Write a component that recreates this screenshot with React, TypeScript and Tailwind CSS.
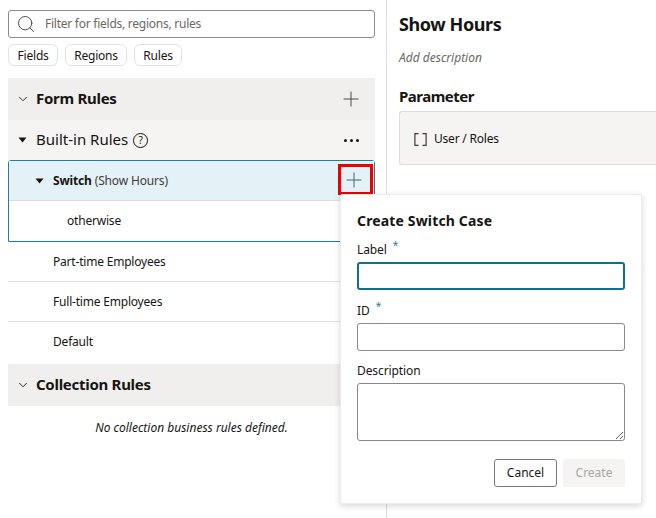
import React from 'react';
import { ChevronDown, Plus, Search } from 'lucide-react';

const Caret = () => (
  <svg width="9" height="6" viewBox="0 0 9 6" className="shrink-0">
    <path d="M0.5 0.5h8L4.5 5.5z" fill="#161513" />
  </svg>
);

const SectionHeader = ({ title, action }: { title: string; action?: React.ReactNode }) => (
  <div className="h-[42px] bg-[#f1efed] flex items-center pl-[8px] pr-[12px]">
    <ChevronDown className="w-[14px] h-[14px] text-[#161513] shrink-0" strokeWidth={1.5} />
    <span className="ml-[6px] pb-[2px] text-[15px] font-bold tracking-[-0.28px] text-[#161513]">{title}</span>
    <div className="ml-auto">{action}</div>
  </div>
);

const CaseRow = ({ label, last }: { label: string; last?: boolean }) => (
  <div className={`flex items-center pl-[45px] text-[12px] tracking-[-0.2px] text-[#161513] ${last ? 'h-[42px] pb-[2px]' : 'h-[40px] border-b border-[#e4e2df]'}`}>
    {label}
  </div>
);

const Field = ({ label, focused }: { label: string; focused?: boolean }) => (
  <div>
    <div className="h-[20px] flex items-start text-[12px] tracking-[-0.1px] text-[#161513] leading-[20px]">
      {label}
      <span className="ml-[6px] text-[10px] leading-[10px] text-[#227e9e]">*</span>
    </div>
    <input
      className={`mt-[2px] block w-[268px] h-[28px] rounded-[3px] bg-white outline-none ${focused ? 'border-2 border-[#0f6f8f]' : 'border border-[#8b8985]'}`}
    />
  </div>
);

export default function App() {
  return (
    <div className="relative w-[656px] h-[518px] overflow-hidden bg-white flex font-['Noto_Sans',sans-serif]">
      <div className="w-[387px] h-full shrink-0 border-r border-[#dfdddb] pl-[8px] pr-[11px] pt-[10px]">
        <div className="h-[28px] rounded-[3px] border border-[#8b8985] flex items-center pl-[7px]">
          <Search className="w-[20px] h-[20px] text-[#3f3d3a]" strokeWidth={1.1} />
          <span className="ml-[9px] text-[12px] tracking-[-0.25px] text-[#6a6864]">Filter for fields, regions, rules</span>
        </div>
        <div className="mt-[6px] flex gap-[6.5px]">
          {['Fields', 'Regions', 'Rules'].map((chip) => (
            <div key={chip} className="h-[22px] px-[8.5px] pt-[2px] flex items-center rounded-[6px] border border-[#e4e2df] text-[12px] tracking-[-0.2px] text-[#161513]">
              {chip}
            </div>
          ))}
        </div>

        <div className="mt-[12px]">
          <SectionHeader title="Form Rules" action={<Plus className="w-[24px] h-[24px] text-[#4b4a40]" strokeWidth={1} />} />
          <div className="h-[40px] bg-[#f5f4f2] flex items-center pl-[10px] pr-[15px]">
            <Caret />
            <span className="ml-[9px] pb-[2px] text-[15px] text-[#161513]">Built-in Rules</span>
            <span className="ml-[5px] w-[15px] h-[15px] rounded-full border border-[#161513] flex items-center justify-center text-[10px] leading-none text-[#161513]">?</span>
            <span className="ml-auto flex gap-[3px] pr-[1px]">
              <i className="w-[3px] h-[3px] rounded-full bg-[#161513]" />
              <i className="w-[3px] h-[3px] rounded-full bg-[#161513]" />
              <i className="w-[3px] h-[3px] rounded-full bg-[#161513]" />
            </span>
          </div>
          <div className="h-[82px] border border-[#227e9e] rounded-t-[3px]">
            <div className="h-[40px] bg-[#e4f1f7] border-b border-[#dfdddb] flex items-center pl-[26px]">
              <Caret />
              <span className="ml-[9px] text-[12px] tracking-[-0.16px] text-[#161513]">
                <span className="font-bold">Switch</span> <span className="text-[#3f3d3a]">(Show Hours)</span>
              </span>
            </div>
            <div className="h-[40px] flex items-center pl-[58px] text-[12px] tracking-[-0.2px] text-[#161513]">otherwise</div>
          </div>
          <CaseRow label="Part-time Employees" />
          <CaseRow label="Full-time Employees" />
          <CaseRow label="Default" last />
          <SectionHeader title="Collection Rules" />
          <div className="mt-[13px] text-center text-[12px] italic text-[#161513]">No collection business rules defined.</div>
        </div>
      </div>

      <div className="flex-1 pl-[12px] pt-[11px]">
        <h1 className="text-[18px] leading-[26px] font-bold tracking-[-0.4px] text-[#161513]">Show Hours</h1>
        <div className="mt-[12px] text-[12px] leading-[18px] italic text-[#6a6864]">Add description</div>
        <h2 className="mt-[19px] text-[15px] leading-[20px] font-bold tracking-[-0.5px] text-[#161513]">Parameter</h2>
        <div className="mt-[5px] h-[54px] w-[300px] rounded-[3px] border border-[#dfdddb] border-r-0 bg-[#f5f4f2] flex items-center pl-[14px] pt-[2px]">
          <svg width="13" height="13" viewBox="0 0 13 13" fill="none" stroke="#4a3630" strokeWidth="1.2" className="shrink-0">
            <path d="M4.5 0.6H0.9V12.4H4.5" />
            <path d="M8.5 0.6H12.1V12.4H8.5" />
          </svg>
          <span className="ml-[7px] text-[12px] tracking-[-0.2px] text-[#161513]">User / Roles</span>
        </div>
      </div>

      {/* highlighted add button */}
      <div className="absolute left-[338px] top-[164px] w-[35px] h-[31px] border-[3px] border-[#ee0000] flex items-center justify-center pr-[3px]">
        <Plus className="w-[24px] h-[24px] shrink-0 text-[#3b6a7c]" strokeWidth={1} />
      </div>

      {/* create case popup */}
      <div className="absolute left-[340px] top-[194px] w-[302px] h-[310px] bg-white rounded-[2px] border border-[#eeedeb] shadow-[0_2px_6px_rgba(0,0,0,0.16)] px-[16px] pt-[16px]">
        <div className="text-[14px] leading-[20px] font-bold tracking-[0.15px] text-[#161513]">Create Switch Case</div>
        <div className="mt-[9px] flex flex-col gap-[11px]">
          <Field label="Label" focused />
          <Field label="ID" />
          <div>
            <div className="h-[20px] text-[12px] leading-[18px] tracking-[-0.1px] text-[#161513]">Description</div>
            <textarea className="mt-[1px] block w-[268px] h-[58px] rounded-[3px] border border-[#8b8985] outline-none" />
          </div>
        </div>
        <div className="mt-[18px] flex justify-end gap-[6px] w-[268px]">
          <div className="h-[28px] w-[63px] rounded-[3px] border border-[#7a7874] flex items-center justify-center text-[12px] text-[#161513]">Cancel</div>
          <div className="h-[28px] w-[62px] rounded-[3px] bg-[#f5f4f2] flex items-center justify-center text-[12px] text-[#a9a7a3]">Create</div>
        </div>
      </div>
    </div>
  );
}
